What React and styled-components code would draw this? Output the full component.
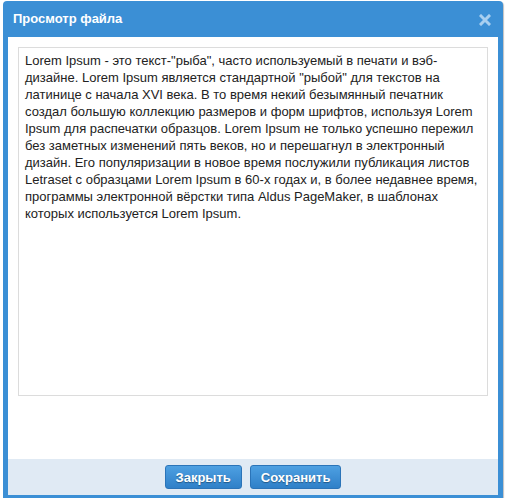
import React from "react";
import styled, { createGlobalStyle } from "styled-components";

const Global = createGlobalStyle`
  html, body { margin: 0; padding: 0; background: #ffffff; }
  body { font-family: "Liberation Sans", Arial, sans-serif; }
`;

const Page = styled.div`
  padding: 1px 0 0 3px;
`;

const Dialog = styled.div`
  width: 500px;
  height: 497px;
  box-sizing: border-box;
  background: #3b8fd5;
  border-radius: 4px 4px 0 0;
  padding: 0 5px 3px 5px;
  display: flex;
  flex-direction: column;
  box-shadow: 1px 1px 1px rgba(0, 0, 0, 0.25);
`;

const Header = styled.div`
  height: 36px;
  display: flex;
  align-items: center;
  justify-content: space-between;
  padding: 0 7px 0 5px;
  flex-shrink: 0;
`;

const Title = styled.span`
  color: #ffffff;
  font-weight: bold;
  font-size: 13px;
  padding-bottom: 2px;
`;

const CloseBtn = styled.button`
  border: 0;
  background: none;
  padding: 0;
  width: 12px;
  height: 12px;
  display: flex;
  cursor: pointer;
  margin-top: 2px;
`;

const Body = styled.div`
  flex: 1;
  background: #ffffff;
  padding: 10px 9px 0 10px;
  display: flex;
  flex-direction: column;
`;

const TextArea = styled.textarea`
  width: 470px;
  height: 349px;
  box-sizing: border-box;
  border: 1px solid #dcdcdc;
  padding: 4px 6px;
  margin: 0;
  resize: none;
  outline: none;
  font-family: "Liberation Sans", Arial, sans-serif;
  font-size: 13px;
  line-height: 17px;
  color: #222;
`;

const Footer = styled.div`
  height: 36px;
  background: #e0eaf4;
  display: flex;
  justify-content: center;
  align-items: center;
  gap: 8px;
  flex-shrink: 0;
`;

const Button = styled.button`
  height: 24px;
  padding: 0 10px;
  border: 1px solid #2b74b8;
  border-radius: 3px;
  background: linear-gradient(#4ea0e2, #2f80c8);
  color: #ffffff;
  font-family: "Liberation Sans", Arial, sans-serif;
  font-weight: bold;
  font-size: 13px;
  text-shadow: 0 1px 1px rgba(0, 0, 0, 0.35);
  cursor: pointer;
`;

const text =
  'Lorem Ipsum - это текст-"рыба", часто используемый в печати и вэб-дизайне. Lorem Ipsum является стандартной "рыбой" для текстов на латинице с начала XVI века. В то время некий безымянный печатник создал большую коллекцию размеров и форм шрифтов, используя Lorem Ipsum для распечатки образцов. Lorem Ipsum не только успешно пережил без заметных изменений пять веков, но и перешагнул в электронный дизайн. Его популяризации в новое время послужили публикация листов Letraset с образцами Lorem Ipsum в 60-х годах и, в более недавнее время, программы электронной вёрстки типа Aldus PageMaker, в шаблонах которых используется Lorem Ipsum.';

export default function App() {
  return (
    <Page>
      <Global />
      <Dialog>
        <Header>
          <Title>Просмотр файла</Title>
          <CloseBtn aria-label="close">
            <svg width="12" height="12" viewBox="0 0 12 12">
              <path d="M2 2 L10 10 M10 2 L2 10" stroke="#a8cff0" strokeWidth="3" strokeLinecap="square" />
            </svg>
          </CloseBtn>
        </Header>
        <Body>
          <TextArea defaultValue={text} />
        </Body>
        <Footer>
          <Button>Закрыть</Button>
          <Button>Сохранить</Button>
        </Footer>
      </Dialog>
    </Page>
  );
}
